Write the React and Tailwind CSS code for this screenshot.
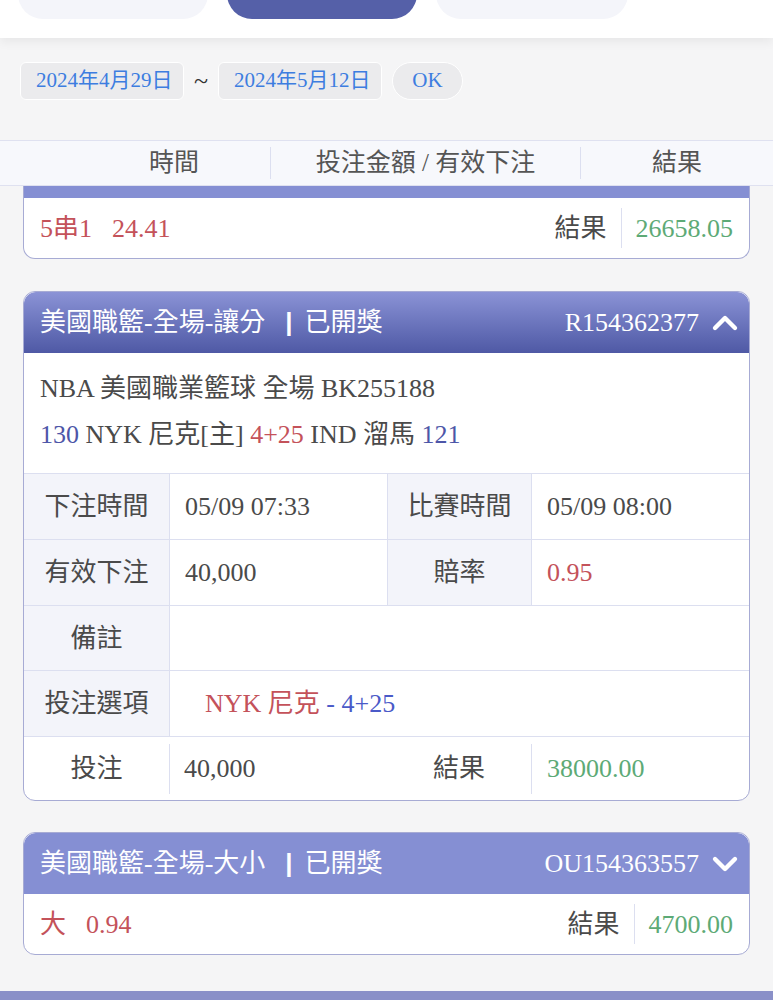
import React from "react";
import { ChevronUp, ChevronDown } from "lucide-react";

const FONT = { fontFamily: '"Liberation Serif", "Noto Sans CJK TC", serif' };

function Divider({ className = "" }) {
  return <div className={"w-px bg-[#dcdff0] " + className} />;
}

function CardHeader({ title, code, open, gradient }) {
  return (
    <div
      className={
        "h-[61px] flex items-center justify-between pl-[16px] pr-[4px] rounded-t-[12px] text-white text-[26px] " +
        (gradient ? "bg-gradient-to-b from-[#8b93d6] to-[#4f59a5]" : "bg-[#858fd3]")
      }
    >
      <div className="flex items-center">
        <span>{title}</span>
        <span className="font-bold ml-[20px] mr-[12px]" style={{ fontFamily: '"Liberation Sans", sans-serif' }}>|</span>
        <span>已開獎</span>
      </div>
      <div className="flex items-center gap-[6px]">
        <span>{code}</span>
        {open ? (
          <ChevronUp size={40} strokeWidth={2.6} className="text-white" />
        ) : (
          <ChevronDown size={40} strokeWidth={2.6} className="text-white" />
        )}
      </div>
    </div>
  );
}

function SummaryRow({ left, odds, result }) {
  return (
    <div className="h-[60px] flex items-center justify-between pl-[16px] pr-[16px] text-[26px]">
      <div className="flex items-center text-[#c4525a]">
        <span>{left}</span>
        <span className="ml-[20px]">{odds}</span>
      </div>
      <div className="flex items-center h-full">
        <span className="text-[#4a4a4a]">結果</span>
        <Divider className="h-[40px] mx-[14px]" />
        <span className="text-[#5daa76]">{result}</span>
      </div>
    </div>
  );
}

export default function App() {
  return (
    <div className="w-[773px] h-[1000px] overflow-hidden bg-[#f5f5f6] text-[#4a4a4a] flex flex-col" style={FONT}>
      {/* top tab bar */}
      <div className="shrink-0 h-[38px] bg-white shadow-[0_4px_10px_rgba(0,0,0,0.06)] flex gap-[19px] pl-[18px] relative z-10 overflow-hidden">
        <div className="w-[190px] h-[50px] -mt-[31px] rounded-[25px] bg-[#f4f5fa]" />
        <div className="w-[190px] h-[50px] -mt-[31px] rounded-[25px] bg-[#5560a8]" />
        <div className="w-[192px] h-[50px] -mt-[31px] rounded-[25px] bg-[#f4f5fa]" />
      </div>

      {/* date row */}
      <div className="shrink-0 mt-[24px] h-[38px] flex items-center pl-[20px] text-[21px] text-[#3d7de0]">
        <div className="h-[38px] w-[164px] flex items-center pl-[15px] rounded-[6px] bg-[#ebebed] border border-white">2024年4月29日</div>
        <span className="w-[34px] text-center text-[#333] text-[26px] leading-none">~</span>
        <div className="h-[38px] w-[164px] flex items-center pl-[15px] rounded-[6px] bg-[#ebebed] border border-white">2024年5月12日</div>
        <div className="ml-[10px] h-[38px] w-[71px] flex items-center justify-center rounded-full bg-[#ebebed] border border-white">OK</div>
      </div>

      {/* column header */}
      <div className="shrink-0 mt-[40px] h-[46px] bg-[#f7f8fc] border-y border-[#dfe1f0] flex items-center text-[25px] text-[#555] relative z-10">
        <div className="w-[270px] pl-[78px] text-center">時間</div>
        <Divider className="h-[32px]" />
        <div className="w-[309px] text-center">投注金額 / 有效下注</div>
        <Divider className="h-[32px]" />
        <div className="flex-1 text-center">結果</div>
      </div>

      {/* card 1 partial */}
      <div className="shrink-0 mx-[23px] border border-t-0 border-[#a7abd4] rounded-b-[12px] bg-white overflow-hidden">
        <div className="h-[12px] bg-[#858fd3]" />
        <SummaryRow left="5串1" odds="24.41" result="26658.05" />
      </div>

      {/* card 2 expanded */}
      <div className="shrink-0 mt-[32px] mx-[23px] border border-[#a7abd4] rounded-[12px] bg-white overflow-hidden">
        <CardHeader title="美國職籃-全場-讓分" code="R154362377" open gradient />
        <div className="h-[120px] pl-[16px] pt-[13px] text-[26px] leading-[46px]">
          <div>NBA 美國職業籃球 全場 BK255188</div>
          <div>
            <span className="text-[#4d56a8]">130</span> NYK 尼克[主] <span className="text-[#c4525a]">4+25</span> IND 溜馬{" "}
            <span className="text-[#4d56a8]">121</span>
          </div>
        </div>
        <div className="grid grid-cols-[145px_218px_144px_1fr] text-[26px]">
          {/* row 1 */}
          <div className="h-[66px] flex items-center justify-center bg-[#f3f4fa] border-t border-[#dcdff0]">下注時間</div>
          <div className="h-[66px] flex items-center pl-[15px] border-t border-l border-[#dcdff0]">05/09 07:33</div>
          <div className="h-[66px] flex items-center justify-center bg-[#f3f4fa] border-t border-l border-[#dcdff0]">比賽時間</div>
          <div className="h-[66px] flex items-center pl-[15px] border-t border-l border-[#dcdff0]">05/09 08:00</div>
          {/* row 2 */}
          <div className="h-[66px] flex items-center justify-center bg-[#f3f4fa] border-t border-[#dcdff0]">有效下注</div>
          <div className="h-[66px] flex items-center pl-[15px] border-t border-l border-[#dcdff0]">40,000</div>
          <div className="h-[66px] flex items-center justify-center bg-[#f3f4fa] border-t border-l border-[#dcdff0]">賠率</div>
          <div className="h-[66px] flex items-center pl-[15px] border-t border-l border-[#dcdff0] text-[#c4525a]">0.95</div>
          {/* row 3 */}
          <div className="h-[65px] flex items-center justify-center bg-[#f3f4fa] border-t border-[#dcdff0]">備註</div>
          <div className="col-span-3 h-[65px] border-t border-l border-[#dcdff0]" />
          {/* row 4 */}
          <div className="h-[66px] flex items-center justify-center bg-[#f3f4fa] border-t border-[#dcdff0]">投注選項</div>
          <div className="col-span-3 h-[66px] flex items-center pl-[35px] border-t border-l border-[#dcdff0]">
            <span className="text-[#c4525a]">NYK 尼克</span>
            <span className="text-[#4a5ac8]">&nbsp;- 4+25</span>
          </div>
          {/* row 5 */}
          <div className="h-[64px] flex items-center justify-center border-t border-[#dcdff0]">投注</div>
          <div className="h-[64px] flex items-center border-t border-[#dcdff0]">
            <Divider className="h-[50px]" />
            <span className="pl-[14px]">40,000</span>
          </div>
          <div className="h-[64px] flex items-center justify-center border-t border-[#dcdff0]">結果</div>
          <div className="h-[64px] flex items-center border-t border-[#dcdff0]">
            <Divider className="h-[50px]" />
            <span className="pl-[15px] text-[#5daa76]">38000.00</span>
          </div>
        </div>
      </div>

      {/* card 3 collapsed */}
      <div className="shrink-0 mt-[31px] mx-[23px] border border-[#a7abd4] rounded-[12px] bg-white overflow-hidden">
        <CardHeader title="美國職籃-全場-大小" code="OU154363557" open={false} />
        <SummaryRow left="大" odds="0.94" result="4700.00" />
      </div>

      {/* bottom bar */}
      <div className="shrink-0 mt-[36px] h-[20px] bg-[#8a90c8]" />
    </div>
  );
}
